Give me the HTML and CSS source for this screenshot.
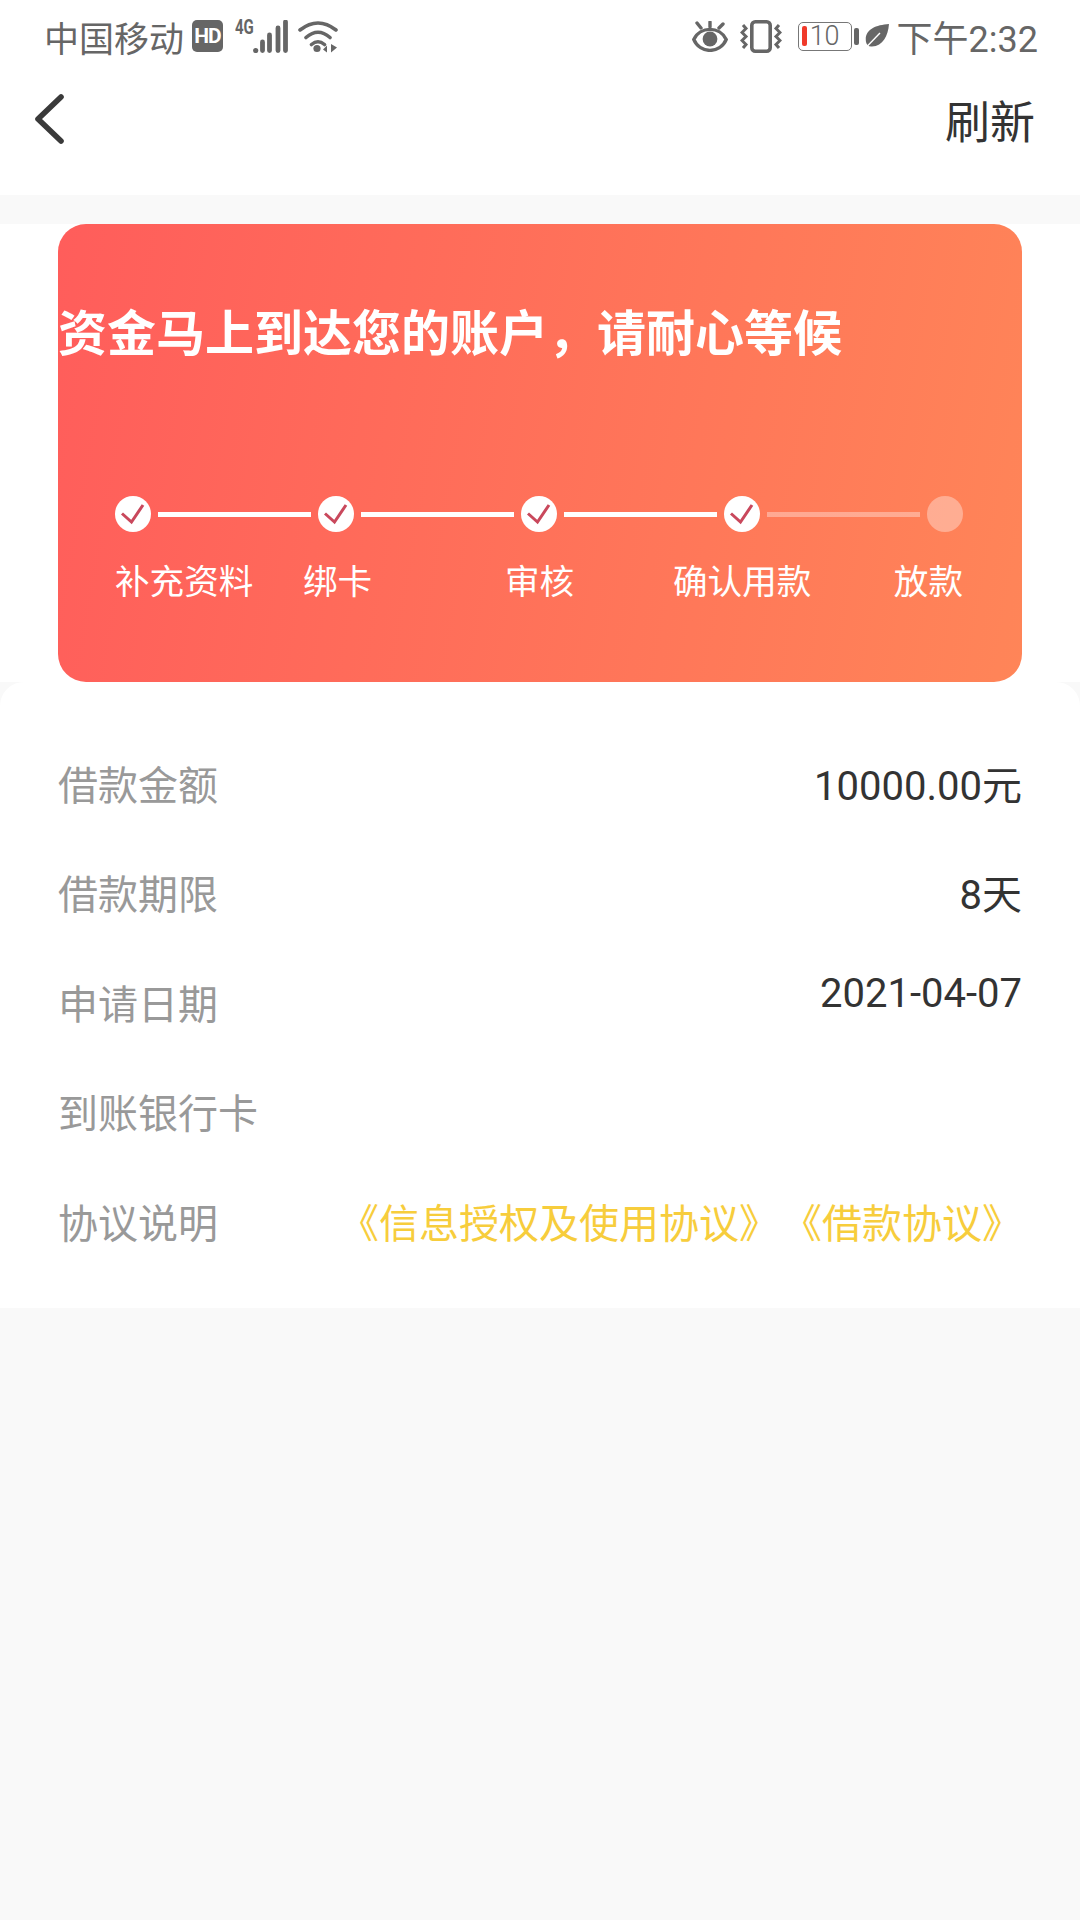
FILE: index.html
```html
<!DOCTYPE html>
<html lang="zh">

<head>
    <meta charset="UTF-8">
    <title>借款详情</title>
    <link rel="stylesheet" href="styles.css">
</head>

<body>
    <div class="statusbar">
        <div class="status-left">
            <span>中国移动</span>
            <span class="hd">HD</span>
            <div class="signal">
                <span class="nettype">4G</span>
                <svg width="53" height="33" viewBox="0 0 53 33">
                    <circle cx="20.7" cy="30.5" r="2.6" fill="#666" />
                    <path d="M27.5 22v8.5M34.5 15v15.500M43 8v22.500M50.500 2v28.500" stroke="#666" stroke-width="4.800" stroke-linecap="round" />
                </svg>
            </div>
            <svg class="wifi" width="40" height="33" viewBox="0 0 40 33">
                <path d="M2 10Q20 -4 38 10M8 17.500Q20 7 32 17.500M13.500 24.500Q20 19 26.500 24.500" stroke="#666" stroke-width="3.600" fill="none" stroke-linecap="round" />
                <circle cx="19" cy="28.500" r="3.600" fill="#666" />
                <path d="M29 25.500l-4 4 4 3zM33 24v8.500l6-5z" fill="#666" />
            </svg>
        </div>
        <div class="status-right">
            <svg width="36" height="31" viewBox="0 0 36 31">
                <path d="M1.800 18.500C8 5 28 5 34.200 18.500C28 33 8 33 1.800 18.500Z" stroke="#666" stroke-width="3.400" fill="none" />
                <circle cx="18" cy="18" r="7.400" fill="#666" />
                <path d="M5 2l4 5M18 1v5M31 3l-4 4" stroke="#666" stroke-width="3.400" stroke-linecap="round" />
            </svg>
            <svg class="vibrate" width="42" height="33" viewBox="0 0 42 33">
                <rect x="11.800" y="1.800" width="18.400" height="29.400" rx="3.500" stroke="#666" stroke-width="3.600" fill="none" />
                <path d="M3 5l3 3.500-4 4 4 4-4 4 4 4-3 3.500M39 5l-3 3.500 4 4-4 4 4 4-4 4 3 3.500" stroke="#666" stroke-width="3" fill="none" />
            </svg>
            <div class="battery">
                <i class="battery-level"></i>
                <span>10</span>
            </div>
            <i class="battery-tip"></i>
            <svg class="leaf" width="24" height="24" viewBox="0 0 24 24">
                <path d="M24 0C10 1 -1 6 1 18C1.500 21 4 23 7 22.500C18 22 23 12 24 0Z" fill="#666" />
                <path d="M1 23.500L15 9" stroke="#fff" stroke-width="1.400" />
            </svg>
            <span class="clock">下午2:32</span>
        </div>
    </div>

    <div class="navbar">
        <svg class="back" width="32" height="50" viewBox="0 0 32 50">
            <path d="M28 3L5 25L28 47" stroke="#3a3a3a" stroke-width="5.600" fill="none" stroke-linecap="round" stroke-linejoin="round" />
        </svg>
        <span class="refresh">刷新</span>
    </div>

    <div class="top">
        <div class="card">
            <h2>资金马上到达您的账户，请耐心等候</h2>
            <div class="steps">
                <div class="step">
                    <svg class="dot" width="36" height="36" viewBox="0 0 36 36">
                        <circle cx="18" cy="18" r="18" fill="#fff" />
                        <path d="M7 17.500L16.500 26L28 9" stroke="#c9485c" stroke-width="3" fill="none" />
                    </svg>
                    <i class="line"></i>
                    <span class="label">补充资料</span>
                </div>
                <div class="step">
                    <svg class="dot" width="36" height="36" viewBox="0 0 36 36">
                        <circle cx="18" cy="18" r="18" fill="#fff" />
                        <path d="M7 17.500L16.500 26L28 9" stroke="#c9485c" stroke-width="3" fill="none" />
                    </svg>
                    <i class="line"></i>
                    <span class="label">绑卡</span>
                </div>
                <div class="step">
                    <svg class="dot" width="36" height="36" viewBox="0 0 36 36">
                        <circle cx="18" cy="18" r="18" fill="#fff" />
                        <path d="M7 17.500L16.500 26L28 9" stroke="#c9485c" stroke-width="3" fill="none" />
                    </svg>
                    <i class="line"></i>
                    <span class="label">审核</span>
                </div>
                <div class="step">
                    <svg class="dot" width="36" height="36" viewBox="0 0 36 36">
                        <circle cx="18" cy="18" r="18" fill="#fff" />
                        <path d="M7 17.500L16.500 26L28 9" stroke="#c9485c" stroke-width="3" fill="none" />
                    </svg>
                    <i class="line faded"></i>
                    <span class="label">确认用款</span>
                </div>
                <div class="step last">
                    <i class="dot-empty"></i>
                    <span class="label">放款</span>
                </div>
            </div>
        </div>
    </div>

    <div class="info">
        <div class="row">
            <span class="key">借款金额</span>
            <span class="val">10000.00元</span>
        </div>
        <div class="row">
            <span class="key">借款期限</span>
            <span class="val">8天</span>
        </div>
        <div class="row date">
            <span class="key">申请日期</span>
            <span class="val">2021-04-07</span>
        </div>
        <div class="row">
            <span class="key">到账银行卡</span>
        </div>
        <div class="row">
            <span class="key">协议说明</span>
            <div class="links">
                <span class="link-first">《信息授权及使用协议》</span>
                <span>《借款协议》</span>
            </div>
        </div>
    </div>
</body>

</html>
```

FILE: styles.css
```css
* {
    margin: 0;
    padding: 0;
    box-sizing: border-box;
}

body {
    width: 1080px;
    height: 1920px;
    background-color: #f9f9f9;
    font-family: "Noto Sans CJK SC", "Roboto", sans-serif;
    overflow: hidden;
}

.statusbar {
    height: 75px;
    background: #fff;
    display: flex;
    justify-content: space-between;
    align-items: center;
    padding: 0 42px 3px 44px;
    color: #666;
    font-size: 35px;
}

.status-left,
.status-right {
    display: flex;
    align-items: center;
}

.hd {
    width: 31px;
    height: 32px;
    margin-left: 8px;
    background: #666;
    border-radius: 5px;
    color: #fff;
    font-family: "Roboto", sans-serif;
    font-size: 21px;
    font-weight: 700;
    line-height: 32px;
    letter-spacing: -1px;
    text-align: center;
}

.signal {
    position: relative;
    width: 53px;
    height: 33px;
    margin-left: 12px;
}

.signal svg {
    display: block;
}

.nettype {
    position: absolute;
    left: 0;
    top: -3px;
    font-family: "Roboto", sans-serif;
    font-size: 20px;
    font-weight: 700;
    line-height: 20px;
    transform: scaleX(0.75);
    transform-origin: left top;
}

.wifi {
    margin-left: 10px;
}

.vibrate {
    margin-left: 12px;
}

.battery {
    position: relative;
    width: 54px;
    height: 29px;
    margin-left: 16px;
    border: 1.5px solid #777;
    border-radius: 5px;
    display: flex;
    align-items: center;
    justify-content: flex-end;
    padding-right: 11px;
    font-family: "Roboto", sans-serif;
    font-size: 27px;
    font-weight: 300;
    line-height: 1;
}

.battery-level {
    position: absolute;
    left: 3px;
    top: 3px;
    width: 5px;
    height: 20px;
    background: #f03a2a;
    border-radius: 2px;
}

.battery-tip {
    width: 5px;
    height: 17px;
    margin-left: 2px;
    background: #666;
    border-radius: 2px;
}

.leaf {
    margin-left: 6px;
}

.clock {
    margin-left: 8px;
    font-family: "Roboto", "Noto Sans CJK SC", sans-serif;
    font-size: 36px;
}

.navbar {
    height: 120px;
    background: #fff;
    display: flex;
    justify-content: space-between;
    align-items: center;
    padding: 0 45px 32px 33px;
}

.refresh {
    font-size: 45px;
    color: #333;
}

.top {
    margin-top: 29px;
    height: 458px;
    background: #fff;
    padding: 0 58px;
}

.card {
    height: 458px;
    border-radius: 28px;
    background: linear-gradient(100deg, #ff5d5b 0%, #ff8558 100%);
    color: #fff;
    padding-top: 76px;
}

.card h2 {
    font-size: 49px;
    font-weight: 700;
    line-height: 60px;
    white-space: nowrap;
}

.steps {
    display: flex;
    margin-top: 136px;
    padding-left: 57px;
}

.step {
    position: relative;
    width: 203px;
    height: 110px;
    flex: none;
}

.step.last {
    width: 36px;
}

.dot {
    display: block;
}

.line {
    position: absolute;
    left: 43px;
    top: 16px;
    width: 153px;
    height: 5px;
    background: #fff;
}

.line.faded {
    background: rgba(255, 255, 255, 0.35);
}

.dot-empty {
    display: block;
    width: 36px;
    height: 36px;
    border-radius: 50%;
    background: rgba(255, 255, 255, 0.35);
}

.label {
    position: absolute;
    left: 0;
    top: 58px;
    font-size: 34.6px;
    line-height: 50px;
    white-space: nowrap;
}

.step:nth-child(2) .label {
    left: -15px;
}

.step:nth-child(3) .label {
    left: -16px;
}

.step:nth-child(4) .label {
    left: -51px;
}

.step.last .label {
    left: auto;
    right: 0;
}

.info {
    height: 626px;
    background: #fff;
    border-radius: 24px 24px 0 0;
    padding: 46px 58px 0;
}

.row {
    height: 109.5px;
    display: flex;
    justify-content: space-between;
    align-items: center;
}

.key {
    font-size: 40px;
    color: #999;
}

.val {
    font-size: 40px;
    color: #333;
    font-family: "Roboto", "Noto Sans CJK SC", sans-serif;
}

.row.date .val {
    margin-bottom: 16px;
}

.links {
    display: flex;
    font-size: 40px;
    color: #f7cd3c;
    white-space: nowrap;
}

.link-first {
    margin-right: 3px;
}
```
